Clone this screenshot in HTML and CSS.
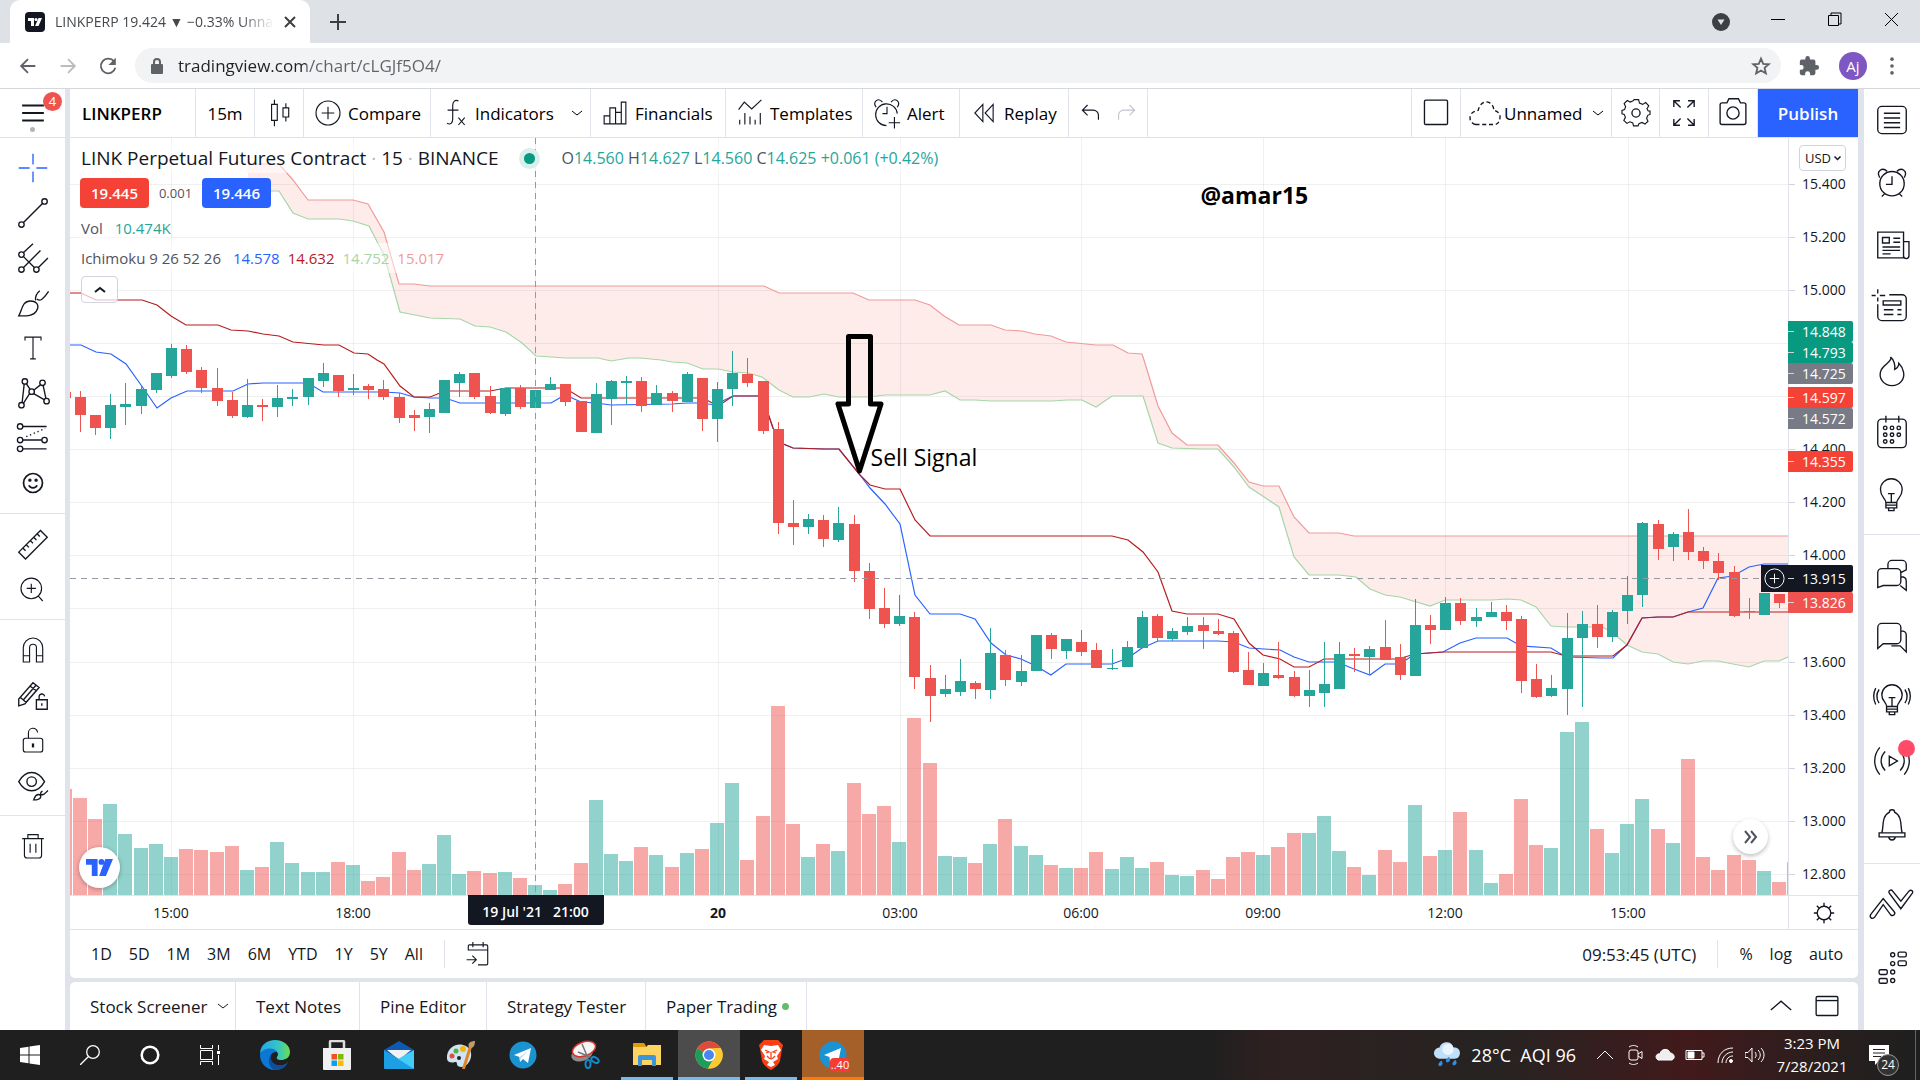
FILE: index.html
```html
<!DOCTYPE html>
<html lang="en">
<head>
    <meta charset="UTF-8">
    <meta name="viewport" content="width=device-width, initial-scale=1.0">
    <title>LINKPERP 19.424 ▼ −0.33% Unnamed</title>
    <link rel="stylesheet" href="styles.css">
</head>
<body>
    <!-- Browser window -->
    <header class="tab-strip">
        <div class="browser-tab">
            <svg class="favicon" viewBox="0 0 20 20"><rect width="20" height="20" rx="4" fill="#131722"/><path d="M3 6h6v8H6V9H3zM13.500 6H17l-3.500 8h-3.400z" fill="#fff"/><circle cx="11" cy="7.500" r="1.500" fill="#fff"/></svg>
            <span class="tab-title">LINKPERP 19.424 ▼ −0.33% Unnamed</span>
            <button class="tab-close" aria-label="Close tab"><svg viewBox="0 0 12 12"><path d="M1 1l10 10M11 1L1 11" stroke="#3c4043" stroke-width="2"/></svg></button>
        </div>
        <button class="new-tab" aria-label="New tab"><svg viewBox="0 0 16 16"><path d="M8 0v16M0 8h16" stroke="#3c4043" stroke-width="2"/></svg></button>
        <div class="window-buttons">
            <button aria-label="Search tabs"><svg viewBox="0 0 20 20"><circle cx="10" cy="10" r="9" fill="#3c4043"/><path d="M6.500 7.500h7L10 13z" fill="#dee1e6"/></svg></button>
            <button aria-label="Minimize"><svg viewBox="0 0 20 20"><path d="M3 7.500h14" stroke="#000"/></svg></button>
            <button aria-label="Restore"><svg viewBox="0 0 20 20"><path d="M3.500 3.500h10v10h-10zM6 3V1h10v11h-2" fill="none" stroke="#000"/></svg></button>
            <button aria-label="Close"><svg viewBox="0 0 20 20"><path d="M3 1l13 13M16 1L3 14" stroke="#000"/></svg></button>
        </div>
    </header>
    <div class="address-bar">
        <button aria-label="Back"><svg viewBox="0 0 24 24"><path d="M20 12H5M12 4.500L4.500 12l7.500 7.500" fill="none" stroke="#5f6368" stroke-width="2"/></svg></button>
        <button aria-label="Forward"><svg viewBox="0 0 24 24"><path d="M4 12h15M12 4.500l7.500 7.500-7.500 7.500" fill="none" stroke="#babcbe" stroke-width="2"/></svg></button>
        <button aria-label="Reload"><svg viewBox="0 0 24 24"><path d="M18.500 7A8 8 0 1 0 20 14" fill="none" stroke="#5f6368" stroke-width="2"/><path d="M20.500 3v8h-8z" fill="#5f6368"/></svg></button>
        <div class="omnibox">
            <svg class="padlock" viewBox="0 0 12 16"><rect y="6" width="12" height="10" rx="1" fill="#5f6368"/><path d="M3 7V4a3 3 0 0 1 6 0v3" fill="none" stroke="#5f6368" stroke-width="2"/></svg>
            <input type="text" aria-label="Address" value="tradingview.com/chart/cLGJf5O4/">
            <button aria-label="Bookmark"><svg viewBox="0 0 24 24"><path d="M12 4l2.400 5.600 6.100.500-4.600 4 1.400 6L12 16.900 6.700 20.100l1.400-6-4.600-4 6.100-.500z" fill="none" stroke="#5f6368" stroke-width="2"/></svg></button>
        </div>
        <button aria-label="Extensions"><svg viewBox="0 0 24 24"><path d="M20.500 11H19V7a2 2 0 0 0-2-2h-4V3.500a2.500 2.500 0 0 0-5 0V5H4a2 2 0 0 0-2 2v3.800h1.500a2.700 2.700 0 0 1 0 5.400H2V20a2 2 0 0 0 2 2h3.800v-1.500a2.700 2.700 0 0 1 5.400 0V22H17a2 2 0 0 0 2-2v-4h1.500a2.500 2.500 0 0 0 0-5z" fill="#5f6368"/></svg></button>
        <button class="avatar">Aj</button>
        <button aria-label="Menu"><svg viewBox="0 0 24 24" fill="#5f6368"><circle cx="12" cy="4.500" r="2"/><circle cx="12" cy="12" r="2"/><circle cx="12" cy="19.500" r="2"/></svg></button>
    </div>

    <main class="app">
        <!-- Drawing tools -->
        <nav class="left-bar">
            <div class="menu-box">
                <button class="menu-button" aria-label="Open menu"><svg class="icon" viewBox="0 0 28 28"><path d="M6 8.500h16M6 14h16M6 19.500h16" stroke-width="1.500"/></svg></button>
                <span class="menu-badge">4</span>
                <span class="menu-dot"></span>
            </div>
            <div class="tool-group">
                <button class="active" aria-label="Cross"><svg class="icon" viewBox="0 0 28 28"><path d="M14 3.500v8M14 16.500v8M3.500 14h8M16.500 14h8"/></svg></button>
                <button aria-label="Trend line"><svg class="icon" viewBox="0 0 28 28"><circle cx="5.500" cy="22.500" r="2"/><circle cx="22.500" cy="5.500" r="2"/><path d="M7 21L21 7"/></svg></button>
                <button aria-label="Pitchfork"><svg class="icon" viewBox="0 0 28 28"><circle cx="5.500" cy="11.500" r="2"/><circle cx="5.500" cy="22.500" r="2"/><circle cx="16.500" cy="22.500" r="2"/><path d="M7 10l7-6.500M7 21L19.500 8.500M18 21l7-7M7 13l8 8"/></svg></button>
                <button aria-label="Brush"><svg class="icon" viewBox="0 0 28 28"><path d="M3.500 23.500C6 19 6 12.500 12 12.500c5 0 7 3.500 4.500 7.500-2.500 4-8 3.500-13 3.500zM16 12c-.500-3 .500-5 3-7M17 11c2 2 4 1 8.500-5.500"/></svg></button>
                <button aria-label="Text"><svg class="icon small" viewBox="0 0 28 28"><path d="M7 7.500V4.500h14v3M14 4.500v19M11.500 23.500h5"/></svg></button>
                <button aria-label="Patterns"><svg class="icon" viewBox="0 0 28 28"><circle cx="8" cy="5.500" r="2"/><circle cx="21" cy="6.500" r="2"/><circle cx="13" cy="13" r="2"/><circle cx="5.500" cy="23" r="2"/><circle cx="24" cy="20" r="2"/><path d="M7.500 7.500L6 21M9 7l3 4.500M19.500 8l-5 4M21.500 8.500l2 9.500M11.500 14.500L7 21.500M14.500 14.500l8 4.500"/></svg></button>
                <button aria-label="Prediction"><svg class="icon" viewBox="0 0 28 28"><circle cx="4.500" cy="5.500" r="2"/><circle cx="4.500" cy="15.500" r="2"/><circle cx="4.500" cy="22" r="2"/><circle cx="22.500" cy="15.500" r="2"/><path d="M6.500 5.500H24M6.500 15.500h14M6.500 22H24"/><path d="M9 13l14-6" stroke-dasharray="1 2"/></svg></button>
                <button aria-label="Emoji"><svg class="icon small" viewBox="0 0 28 28"><circle cx="14" cy="14" r="8.300" stroke-width="1.500"/><circle cx="11.300" cy="11.500" r="1" fill="#131722"/><circle cx="16.700" cy="11.500" r="1" fill="#131722"/><path d="M10.500 16c1 3 6 3 7 0" stroke-width="1.500"/></svg></button>
            </div>
            <div class="tool-group">
                <button aria-label="Measure"><svg class="icon" viewBox="0 0 28 28"><path d="M3.500 20L19.500 4l5 5-16 16zM6.500 17l2 2M9 14.500l2 2M12 11.500l2 2M14.500 9l2 2M17 6.500l2 2"/></svg></button>
                <button aria-label="Zoom in"><svg class="icon small" viewBox="0 0 28 28"><circle cx="12.500" cy="13.500" r="9"/><path d="M12.500 9.500v8M8.500 13.500h8M18.500 20l4 4.500"/></svg></button>
            </div>
            <div class="tool-group">
                <button aria-label="Magnet"><svg class="icon small" viewBox="0 0 28 28"><path d="M5.500 24.500V12a8.500 8.500 0 0 1 17 0v12.500h-5.500V12a3 3 0 0 0-6 0v12.500zM5.500 19h5.500M17 19h5.500"/></svg></button>
                <button aria-label="Drawing mode"><svg class="icon" viewBox="0 0 28 28"><path d="M3.500 22v-5L14 5l4.500 3.500L8 20.500zM5 16l4 3.500M12 7.500l4 3M7 17.500L16 7M16.500 17.500h8v7h-8zM18.500 17.500v-2a2 2 0 0 1 4-.500M20.500 20v2"/></svg></button>
                <button aria-label="Lock drawings"><svg class="icon small" viewBox="0 0 28 28"><rect x="5.500" y="12.500" width="17" height="12" rx="2"/><path d="M10 12.500V8a4 4 0 0 1 8-.500"/><path d="M14 17v3.500" stroke-width="2"/></svg></button>
                <button aria-label="Hide drawings"><svg class="icon" viewBox="0 0 28 28"><path d="M3.500 11.500c5-9 14-9 19 0-5 9-14 9-19 0z"/><circle cx="13" cy="11.500" r="3.500"/><path d="M14.500 25c1-2 1-4 3.500-4s3 4-3.500 4zM20 22c-1-2 0-3 1-3.500M20 21c2 1 3-1 5-3"/></svg></button>
            </div>
            <div class="tool-group">
                <button aria-label="Remove drawings"><svg class="icon small" viewBox="0 0 28 28"><path d="M4.500 7.500h19M9.500 7V4h9v3M6.500 7.500V22a2.500 2.500 0 0 0 2.500 2.500h10a2.500 2.500 0 0 0 2.500-2.500V7.500M11.500 12v8M16.500 12v8"/></svg></button>
            </div>
        </nav>

        <section class="center">
            <div class="toolbar">
                <button class="symbol">LINKPERP</button>
                <button class="middle">15m</button>
                <button class="middle" aria-label="Candles"><svg class="icon small" viewBox="0 0 28 28"><path d="M7.500 6.500h5v14h-5zM10 2.500v4M10 20.500v5M17.500 9.500h5v8h-5zM20 5.500v4M20 17.500v4"/></svg></button>
                <button><svg class="icon small" viewBox="0 0 28 28"><circle cx="14" cy="14" r="10.500"/><path d="M14 8.500v11M8.500 14h11"/></svg>Compare</button>
                <button><svg class="icon small" viewBox="0 0 28 28"><path d="M17 3.500c-3-1.500-5 .500-5 4V19c0 4-2 5.500-5 4M7.500 11.500H17M17 18l5.500 6.500M22.500 18L17 24.500"/></svg>Indicators<svg class="chevron" viewBox="0 0 12 8"><path d="M1 2l5 4 5-4"/></svg></button>
                <button><svg class="icon small" viewBox="0 0 28 28"><path d="M4.500 16.500h5v7h-5zM9.500 9.500h5v14h-5zM14.500 13.500h5v10h-5zM19.500 4.500h4v19h-4z"/></svg>Financials</button>
                <button><svg class="icon small" viewBox="0 0 28 28"><path d="M4 11l5-6.500 6.500 6L24 2.500M5 20v4M9.500 14v10M14 17v7M18.500 20v4M23 14v10"/></svg>Templates</button>
                <button><svg class="icon small" viewBox="0 0 28 28"><path d="M13.500 25a9.500 9.500 0 1 1 9.500-10.500M4.500 9C1 4 6.500 0 10 4.500M17.500 4.500C21 0 26.500 4 23 9M14 8.500v6h-4M20.500 17.500v10M15.500 22.500h10"/></svg>Alert</button>
                <button><svg class="icon small" viewBox="0 0 28 28"><path d="M13 6.500v15L6 14zM22 6.500v15L15 14z"/></svg>Replay</button>
                <div class="history">
                    <button aria-label="Undo"><svg class="icon small" viewBox="0 0 28 28"><path d="M11 7l-4.500 4.500L11 16M6.500 11.500H16a4.500 4.500 0 0 1 4.500 4.500v4"/></svg></button>
                    <button class="disabled" aria-label="Redo"><svg class="icon small" viewBox="0 0 28 28"><path d="M17 7l4.500 4.500L17 16M21.500 11.500H12A4.500 4.500 0 0 0 7.500 16v4"/></svg></button>
                </div>
                <div class="spacer"></div>
                <button class="middle" aria-label="Layout"><svg class="icon" viewBox="0 0 28 28"><rect x="5.500" y="4.500" width="17" height="18" rx="1"/></svg></button>
                <button class="unnamed"><svg class="icon" viewBox="0 0 28 28"><path d="M7 22.500a5 5 0 0 1-1-9.500l3-1C10 7 14 4.500 17.500 6.500c2.500 1.500 3 4 3 5.500 3.500 1 5 3 4.500 6s-2 4.500-4 4.500z" stroke-dasharray="3 2"/></svg>Unnamed<svg class="chevron" viewBox="0 0 12 8"><path d="M1 2l5 4 5-4"/></svg></button>
                <button class="middle" aria-label="Settings"><svg class="icon" viewBox="0 0 28 28"><path d="M12 3h4l.700 3 2.800 1.200 2.700-1.600 2.700 2.800-1.600 2.700L24.400 13H26v3l-2 .800-1 2.500 1.200 2.700-2.600 2.500-2.700-1.500-2.600 1.100L15.500 26h-4l-.600-2.500-2.500-1-2.700 1.400L3 21.300l1.400-2.700-1-2.600-2-.500v-3l2.200-.700 1-2.500L3.300 6.500 6 3.800l2.600 1.400L11.200 4z" transform="translate(2.500 1.600) scale(.84)"/><circle cx="14" cy="14" r="3"/></svg></button>
                <button class="middle" aria-label="Fullscreen"><svg class="icon" viewBox="0 0 28 28"><path d="M6.500 9.500V5H11M7 5.500l4.500 4.500M17 5h4.500v4.500M21 5.500L16.500 10M6.500 18.500V23H11M7 22.500l4.500-4.500M17 23h4.500v-4.500M21 22.500L16.500 18"/></svg></button>
                <button class="middle" aria-label="Snapshot"><svg class="icon" viewBox="0 0 28 28"><path d="M6 6.500h3.500l1.500-3h7l1.500 3H22a1.500 1.500 0 0 1 1.500 1.500v13a1.500 1.500 0 0 1-1.500 1.500H6A1.500 1.500 0 0 1 4.500 21V8A1.500 1.500 0 0 1 6 6.500z"/><circle cx="14" cy="14" r="4.500"/></svg></button>
                <button class="publish">Publish</button>
            </div>

            <div class="chart-row">
                <div class="pane">
                    <svg id="chart" viewBox="70 138 1718 757" preserveAspectRatio="none"></svg>
                    <div class="legend">
                        <div class="legend-title"><h1>LINK Perpetual Futures Contract <i>·</i> 15 <i>·</i> BINANCE</h1><span class="market-dot"></span>
                            <p class="ohlc">O<b>14.560</b> H<b>14.627</b> L<b>14.560</b> C<b>14.625</b> <b>+0.061 (+0.42%)</b></p></div>
                        <div class="trade"><button class="sell">19.445</button><span>0.001</span><button class="buy">19.446</button></div>
                        <p class="study">Vol <b class="teal">10.474K</b></p>
                        <p class="study">Ichimoku 9 26 52 26 <b class="blue">14.578</b><b class="dark-red">14.632</b><b class="green">14.752</b><b class="pink">15.017</b></p>
                        <button class="collapse" aria-label="Collapse legend"><svg class="chevron" viewBox="0 0 12 8"><path d="M1 6l5-4 5 4" stroke-width="2"/></svg></button>
                    </div>
                    <span class="note author">@amar15</span>
                    <span class="note signal">Sell Signal</span>
                    <a class="tv-logo" href="#" aria-label="TradingView"><svg viewBox="0 0 28 18"><path d="M0 0h12v18H6V6H0zM20 0h8l-7.500 18h-7z"/><circle cx="16" cy="3" r="3"/></svg></a>
                    <button class="scroll-end" aria-label="Scroll to last bar"><svg viewBox="0 0 16 16"><path d="M2 2l5 6-5 6M8 2l5 6-5 6"/></svg></button>
                </div>
                <div class="price-axis" id="priceAxis">
                    <select aria-label="Currency"><option>USD</option></select>
                    <svg class="usd-arrow" viewBox="0 0 12 8"><path d="M2 2l4 4 4-4"/></svg>
                </div>
            </div>
            <div class="time-row">
                <div class="time-axis" id="timeAxis"><span class="time-tag">19 Jul '21 &nbsp; 21:00</span></div>
                <button class="axis-settings" aria-label="Axis settings"><svg class="icon" viewBox="0 0 28 28"><circle cx="14" cy="14" r="5"/><path d="M14 6.500V9M14 19v2.500M6.500 14H9M19 14h2.500M8.700 8.700l1.800 1.800M17.500 17.500l1.800 1.800M8.700 19.300l1.800-1.800M17.500 10.500l1.800-1.800"/></svg></button>
            </div>
            <div class="range-bar">
                <button>1D</button><button>5D</button><button>1M</button><button>3M</button><button>6M</button><button>YTD</button><button>1Y</button><button>5Y</button><button>All</button>
                <span class="divider"></span>
                <button aria-label="Go to date"><svg class="icon small" viewBox="0 0 28 28"><path d="M5.500 11V7a1 1 0 0 1 1-1h15a1 1 0 0 1 1 1v15.500a1 1 0 0 1-1 1H14M5.500 10.500h17M9.500 3.500V8M18.500 3.500V8M4 19h8M9 15.500l3.500 3.500L9 22.500"/></svg></button>
                <div class="spacer"></div>
                <button class="clock">09:53:45 (UTC)</button>
                <span class="divider"></span>
                <button>%</button><button>log</button><button>auto</button>
            </div>
            <div class="bottom-tabs">
                <button>Stock Screener<svg class="chevron" viewBox="0 0 12 8"><path d="M1 2l5 4 5-4"/></svg></button>
                <button>Text Notes</button>
                <button>Pine Editor</button>
                <button>Strategy Tester</button>
                <button>Paper Trading<span class="online"></span></button>
                <div class="panel-buttons">
                    <button aria-label="Open panel"><svg class="icon" viewBox="0 0 28 28"><path d="M6.500 17L14 10.500l7.500 6.500"/></svg></button>
                    <button aria-label="Maximize panel"><svg class="icon" viewBox="0 0 28 28"><rect x="6" y="7" width="16" height="14" rx="1"/><path d="M6 10h16"/></svg></button>
                </div>
            </div>
        </section>

        <!-- Widgets -->
        <nav class="right-bar">
            <div class="widget-group first">
                <button aria-label="Watchlist"><svg class="icon" viewBox="0 0 28 28"><rect x="3.500" y="4" width="21" height="20" rx="3"/><path d="M8 9h12M8 12.500h12M8 16h12M8 19.500h12"/></svg></button>
                <button aria-label="Alerts"><svg class="icon" viewBox="0 0 28 28"><circle cx="14" cy="14.500" r="9"/><path d="M5 10C2 5 7 2 10.500 5.500M17.500 5.500C21 2 26 5 23 10M14 9v6H9.500M8.500 22L6.500 24M19.500 22l2 2"/></svg></button>
                <button aria-label="News"><svg class="icon" viewBox="0 0 28 28"><path d="M3.500 4.500h19v19h-19zM22.500 11.500h4V22a1.500 1.500 0 0 1-4 0zM7 8.500h5v4H7zM15 9h5M15 12h5M7 15.500h13M7 18h13M7 20.500h6"/></svg></button>
                <button aria-label="Data window"><svg class="icon" viewBox="0 0 28 28"><path d="M3.500 12v9a3 3 0 0 0 3 3h15a3 3 0 0 0 3-3V8a3 3 0 0 0-3-3H12M3.500 1v3M3.500 7v3M-1 5.500h3M5 5.500h4M7.500 9.500h13v3h-13zM8 16h7M18 16h3M8 19.500h7M18 19.500h3"/></svg></button>
                <button aria-label="Hotlists"><svg class="icon" viewBox="0 0 28 28"><path d="M13 4.500C14.500 8 8 9.500 6 14c-2.500 6 2 11.500 8 11.500s9.500-5 8.500-10c-.500-3-2-5-3.500-6.500 0 2-1 3.500-3 4.500.500-3-.500-7-3-9z"/></svg></button>
                <button aria-label="Calendar"><svg class="icon" viewBox="0 0 28 28"><rect x="3.500" y="4.500" width="21" height="21" rx="3"/><path d="M9.500 2v5M19 2v5"/><g><circle cx="9" cy="11" r="1.300"/><circle cx="14" cy="11" r="1.300"/><circle cx="19" cy="11" r="1.300"/><circle cx="9" cy="16" r="1.300"/><circle cx="14" cy="16" r="1.300"/><circle cx="19" cy="16" r="1.300"/><circle cx="9" cy="21" r="1.300"/><circle cx="14" cy="21" r="1.300"/></g></svg></button>
                <button aria-label="My ideas"><svg class="icon" viewBox="0 0 28 28"><path d="M9.500 19.500c0-3-4-4-4-9.500a8 8 0 0 1 16 0c0 5.500-4 6.500-4 9.500zM9.500 19.500v4h8v-4M9.500 21.500h8M11.500 24v1.500h4V24M11 13h5M13.500 13v6.500"/></svg></button>
            </div>
            <div class="widget-group second">
                <button aria-label="Public chats"><svg class="icon" viewBox="0 0 28 28"><path d="M3.500 24V13a3 3 0 0 1 3-3h11a3 3 0 0 1 3 3v6.500a3 3 0 0 1-3 3h-10zM11 9.500V7a3 3 0 0 1 3-3h7.500a3 3 0 0 1 3 3v4l-4 2M20.500 16c3 0 4 1 4 3v7L20 22.500"/></svg></button>
                <button aria-label="Private chats"><svg class="icon" viewBox="0 0 28 28"><path d="M3.500 22.500V7a3 3 0 0 1 3-3h11a3 3 0 0 1 3 3v9a3 3 0 0 1-3 3h-10zM20.500 9.500c3 0 4 1 4 3v12.500L20 20.500h-6.500"/></svg></button>
                <button aria-label="Ideas stream"><svg class="icon" viewBox="0 0 28 28"><path d="M10 19.500c0-3-3.500-4-3.500-8.500a7.500 7.500 0 0 1 15 0c0 4.500-3.500 5.500-3.500 8.500zM10 19.500v4h8v-4M10 21.500h8M12 24v1.500h4V24M11.500 13h5M14 13v6.500M4.500 7c-2 3-2 7 0 10M2 6c-2 4-2 8 0 12M23.500 7c2 3 2 7 0 10M26 6c2 4 2 8 0 12"/></svg></button>
                <button aria-label="Streams"><svg class="icon" viewBox="0 0 28 28"><path d="M12 10.500v7l6-3.500zM9 7c-4 4-4 10 0 14M5 4c-5 6-5 14 0 20M20 7c4 4 4 10 0 14M23 4c5 6 5 14 0 20"/></svg><span class="live-dot"></span></button>
                <button aria-label="Notifications"><svg class="icon" viewBox="0 0 28 28"><path d="M6.500 20.500C8 17 6 8 12 5.500a2 2 0 0 1 4 0C22 8 20 17 21.500 20.500M4.500 20.500h19v3h-19zM11.500 23.500c.500 3 4.500 3 5 0"/></svg></button>
            </div>
            <div class="widget-group third">
                <button aria-label="Order panel"><svg class="icon" viewBox="0 0 28 28"><path d="M-1.500 21.500L7.500 10l8 9.500c1.500 1.500-.500 4-2.500 2.500l-5.500-7.500L1 24c-2 1.500-4-.500-2.500-2.500zM12 6c-1-2 1.500-3 2.500-1.500l6 7.500 6-7.500c1.500-1.500 3.500 0 2.500 1.500l-8.500 11.500z"/></svg></button>
                <button aria-label="Depth of market"><svg class="icon" viewBox="0 0 28 28"><rect x="4.500" y="16" width="6" height="3.500" rx="1"/><rect x="4.500" y="22.500" width="6" height="3.500" rx="1"/><circle cx="14.500" cy="17.700" r="1.500"/><circle cx="14.500" cy="24" r="1.500"/><circle cx="14.500" cy="5" r="1.500"/><circle cx="14.500" cy="11.500" r="1.500"/><rect x="18.500" y="3" width="6" height="3.500" rx="1"/><rect x="18.500" y="9.500" width="6" height="3.500" rx="1"/></svg></button>
            </div>
        </nav>
    </main>

    <!-- Windows taskbar -->
    <footer class="taskbar">
        <div class="system-buttons">
            <button aria-label="Start"><svg viewBox="0 0 20 20" fill="#fff"><path d="M0 3l8.500-1.200v7.700H0zM9.500 1.600L20 0v9.500H9.500zM0 10.500h8.500v7.700L0 17zM9.500 10.500H20V20L9.500 18.400z"/></svg></button>
            <button aria-label="Search"><svg viewBox="0 0 20 20" fill="none" stroke="#fff" stroke-width="1.300"><circle cx="13" cy="7" r="6.300"/><path d="M8.500 11.500L0 20"/></svg></button>
            <button aria-label="Cortana"><svg viewBox="0 0 20 20"><circle cx="10" cy="10" r="8.300" fill="none" stroke="#fff" stroke-width="2.500"/></svg></button>
            <button aria-label="Task view"><svg viewBox="0 0 20 20" fill="none" stroke="#fff"><path d="M.500 5.500h12v9H.500zM.500 0v3.500h12V0M.500 20v-3.500h12V20M18.500 0v5M18.500 10v10"/><rect x="17.500" y="6.500" width="2" height="2" fill="#fff"/></svg></button>
        </div>
        <div class="apps">
            <button aria-label="Edge"><svg viewBox="0 0 30 30"><defs><linearGradient id="edge"><stop stop-color="#1fa7e8"/><stop offset=".6" stop-color="#36c4c8"/><stop offset="1" stop-color="#6be04a"/></linearGradient></defs><path d="M0 14C0 5 7 0 15 0c9 0 15 6 15 12 0 6-5 8-9 8-3 0-5-1-4-3 3-4-1-7-5-7C6 10 1 11 0 14z" fill="url(#edge)"/><path d="M0 15C1 8 14 6 17 12c-6-1-8 5-5 10s11 5 16 0c-3 6-8 8-13 8C6 30 0 23 0 15z" fill="#0c78d4"/><path d="M12 13c-4 7 2 14 11 12 2 0 4-2 5-3-3 6-8 8-13 8-7-2-8-12-3-17z" fill="#0f4e9b"/></svg></button>
            <button aria-label="Store"><svg viewBox="0 0 30 30"><path d="M8 9V2a1 1 0 0 1 1-1h12a1 1 0 0 1 1 1v7" fill="none" stroke="#ddd" stroke-width="2.500"/><path d="M1 8h28v21a1 1 0 0 1-1 1H2a1 1 0 0 1-1-1z" fill="#f0f0f0"/><path d="M9.500 14H15v5.500H9.500z" fill="#f25022"/><path d="M16 14h5.500v5.500H16z" fill="#7fba00"/><path d="M9.500 20.500H15V26H9.500z" fill="#00a4ef"/><path d="M16 20.500h5.500V26H16z" fill="#ffb900"/></svg></button>
            <button aria-label="Mail"><svg viewBox="0 0 30 30"><path d="M0 10L15 1l15 9v6H0z" fill="#0f5ab0"/><path d="M3 10h24L15 20z" fill="#f2f2f2"/><path d="M0 10l30 18a1 1 0 0 1-1 1H1a1 1 0 0 1-1-1z" fill="#1d9fe3"/><path d="M30 10L14 19l16 10z" fill="#41cdf8"/></svg></button>
            <button aria-label="Paint"><svg viewBox="0 0 30 30"><path d="M1 19C0 9 9 3 17 5c9 2 10 11 6 17-3 5-8 6-11 4-2-2 0-4-3-4-3 1-7 1-8-3z" fill="#cfe4f2"/><circle cx="6" cy="16" r="2.500" fill="#e64a3c"/><circle cx="10" cy="11" r="2.500" fill="#4caf50"/><circle cx="17" cy="9" r="3" fill="#f6b40e"/><circle cx="13" cy="18" r="2" fill="#20242a"/><path d="M16 29l7-23 3 1-7 22z" fill="#e08427"/><path d="M23 7c-2-4 2-6 6-6 0 3-1 7-4 7z" fill="#c39a6b"/></svg></button>
            <button aria-label="Telegram"><svg viewBox="0 0 30 30"><circle cx="15" cy="15" r="13.500" fill="#1c93d1"/><path d="M6 15l17-7-3 15-5-4-3 3-.500-5z" fill="#fff"/><path d="M11.500 17L20 11l-7 7-1 4z" fill="#bcdcef"/></svg></button>
            <button aria-label="Snipping Tool"><svg viewBox="0 0 30 30"><ellipse cx="12" cy="14" rx="11" ry="7" fill="#8d8d8d" transform="rotate(-20 12 14)"/><ellipse cx="14" cy="9" rx="12" ry="7" fill="#f6f6f6" stroke="#d9332e" stroke-width="1.500" transform="rotate(-20 14 9)"/><path d="M12 4l6 14M8 12l12 5" stroke="#777" stroke-width="1.500"/><g fill="none" stroke="#1588c9" stroke-width="2"><ellipse cx="18" cy="24" rx="2.500" ry="4"/><ellipse cx="25" cy="20" rx="4" ry="2.500" transform="rotate(30 25 20)"/></g></svg></button>
            <button class="open" aria-label="File Explorer"><svg viewBox="0 0 30 30"><path d="M1 4a1 1 0 0 1 1-1h10l2 3v4H1z" fill="#e29a0c"/><path d="M1 7h13l2-2h13v20H1z" fill="#fcd462"/><path d="M6 26V17a2 2 0 0 1 2-2h14a2 2 0 0 1 2 2v9h-4v-6H10v6z" fill="#3a95dc"/></svg></button>
            <button class="open current" aria-label="Chrome"><svg viewBox="0 0 30 30"><circle cx="15" cy="15" r="13.500" fill="#fbc934"/><path d="M15 15L3.300 8.200A13.500 13.500 0 0 1 26.700 8.200H15z" fill="#e04a3c"/><path d="M3.300 8.200A13.500 13.500 0 0 0 14 28.500L20 18l-5-3z" fill="#1d9d58"/><path d="M14 28.500L21 16l-1-8h6.700A13.500 13.500 0 0 1 14 28.500z" fill="#fbc934"/><circle cx="15" cy="15" r="6.500" fill="#fff"/><circle cx="15" cy="15" r="5" fill="#4a86f0"/></svg></button>
            <button class="open" aria-label="Brave"><svg viewBox="0 0 30 30"><path d="M8 0h14l3 3 2 2-1 4-2 12c-1 3-5 7-9 9-4-2-8-6-9-9L4 9 3 5l2-2z" fill="#fb3f14"/><path d="M8 5l7 1 7-1 3 5-4 6 1 3-5 3 2 3-4 2-4-2 2-3-5-3 1-3-4-6z" fill="#fff"/><path d="M9 10l4 2-3 1M21 10l-4 2 3 1M13 18l2 1 2-1M15 12v6M11 16l2 2M19 16l-2 2" stroke="#fb3f14" stroke-width="1.300" fill="none"/></svg></button>
            <button class="open alerting" aria-label="Telegram messages"><svg viewBox="0 0 30 30"><circle cx="15" cy="15" r="13.500" fill="#1c93d1"/><path d="M6 15l17-7-3 15-5-4-3 3-.500-5z" fill="#fff"/></svg><span class="unread">..40</span></button>
        </div>
        <div class="tray">
            <svg class="weather" viewBox="0 0 30 30"><path d="M7 19a6 6 0 0 1 0-12c2-7 13-8 15 0 9-1 9 12 1 12z" fill="#bfe0fa"/><circle cx="16" cy="9" r="6" fill="#e9f5ff"/><path d="M9 21c3 4 0 6-1.500 6S4 25 9 21zM17 17c3 4 0 6-1.500 6S12 21 17 17zM24 20c3 4 0 6-1.500 6S19 24 24 20z" fill="#2f8ee5"/></svg>
            <span class="forecast">28°C &nbsp;AQI 96</span>
            <svg viewBox="0 0 20 20"><path d="M2 14l8-8 8 8"/></svg>
            <svg viewBox="0 0 20 20"><rect x="4" y="5" width="9" height="10" rx="2"/><path d="M13 9l4-2.500v7L13 11M4 2c3-2 6-2 9 0M4 18c3 2 6 2 9 0"/></svg>
            <svg viewBox="0 0 20 20"><path d="M3 15C-1 12 2 8 5 9c1-6 9-6 10-1 4 0 6 5 2 7z" fill="#eee"/></svg>
            <svg viewBox="0 0 20 20"><path d="M1 5.500h16v9H1zM17 8h2v4h-2"/><path d="M3 7h6v6H3z" fill="#fff"/></svg>
            <svg viewBox="0 0 20 20"><path d="M3 18C3 9 9 3 18 3M7 18c0-6 5-11 11-11M11 18c0-4 3-7 7-7"/><circle cx="16" cy="16" r="1.500" fill="#fff"/></svg>
            <svg viewBox="0 0 20 20"><path d="M0 7.500h3L7 3v14l-4-4.500H0zM10 7c1.500 2 1.500 4 0 6M13 5c3 3 3 7 0 10M16 3c4 4 4 10 0 14"/></svg>
            <div class="date"><span>3:23 PM</span><span>7/28/2021</span></div>
            <button class="action-center" aria-label="Notifications"><svg viewBox="0 0 20 20"><path d="M0 0h20v16H10l-4 4v-4H0z" fill="#fff" stroke="none"/><path d="M4 4.500h12M4 8h12M4 11.500h8" stroke="#222"/></svg><span>24</span></button>
            <span class="show-desktop"></span>
        </div>
    </footer>

    <script>
        // dir, high, top of body, bottom of body, low, top of volume bar
        const bars = [
            ['r', 391, 392, 398, 398, 789], ['r', 391, 397, 415, 432, 798], ['r', 415, 415, 428, 435, 819],
            ['g', 394, 405, 428, 439, 804], ['g', 383, 404, 407, 425, 834], ['g', 385, 389, 406, 414, 848],
            ['g', 373, 373, 390, 393, 844], ['g', 344, 348, 376, 378, 857], ['r', 345, 349, 372, 374, 849],
            ['r', 367, 370, 388, 393, 850], ['r', 368, 388, 401, 406, 852], ['r', 392, 400, 416, 418, 846],
            ['g', 379, 405, 417, 418, 870], ['r', 399, 405, 407, 421, 867], ['g', 385, 398, 407, 417, 842],
            ['g', 389, 397, 399, 406, 863], ['g', 378, 378, 397, 405, 872], ['g', 363, 373, 381, 387, 872],
            ['r', 375, 375, 391, 397, 862], ['g', 374, 388, 390, 395, 865], ['r', 384, 386, 390, 399, 881],
            ['r', 380, 389, 397, 400, 877], ['r', 393, 397, 418, 423, 852], ['r', 410, 415, 418, 431, 870],
            ['g', 403, 409, 417, 433, 864], ['g', 380, 380, 413, 413, 835], ['g', 372, 374, 383, 397, 874],
            ['r', 373, 373, 397, 399, 871], ['r', 386, 396, 413, 414, 873], ['g', 388, 388, 414, 416, 872],
            ['r', 385, 388, 407, 409, 878], ['g', 390, 390, 408, 408, 885], ['g', 377, 384, 390, 390, 890],
            ['r', 384, 384, 402, 406, 884], ['r', 401, 401, 432, 432, 863], ['g', 383, 394, 433, 433, 800],
            ['g', 380, 381, 399, 425, 854], ['g', 376, 381, 383, 404, 861], ['r', 377, 381, 406, 412, 847],
            ['g', 385, 393, 405, 405, 855], ['r', 391, 393, 401, 412, 867], ['g', 372, 374, 402, 402, 853],
            ['r', 378, 378, 419, 431, 849], ['g', 382, 389, 419, 442, 823], ['g', 351, 373, 389, 406, 783],
            ['r', 358, 374, 383, 387, 860], ['r', 381, 381, 431, 434, 816], ['r', 422, 429, 523, 534, 706],
            ['r', 500, 523, 527, 545, 824], ['g', 514, 519, 527, 534, 857], ['r', 515, 520, 539, 547, 844],
            ['g', 507, 523, 540, 542, 851], ['r', 515, 524, 571, 582, 783], ['r', 563, 571, 609, 619, 814],
            ['r', 588, 608, 624, 628, 806], ['g', 595, 616, 624, 626, 842], ['r', 612, 617, 677, 689, 718],
            ['r', 665, 678, 696, 722, 763], ['g', 675, 689, 694, 697, 856], ['g', 659, 681, 692, 696, 857],
            ['r', 681, 683, 689, 699, 863], ['g', 628, 653, 690, 699, 844], ['r', 650, 655, 680, 686, 819],
            ['g', 655, 671, 682, 686, 846], ['g', 635, 635, 671, 671, 855], ['r', 633, 635, 649, 659, 865],
            ['g', 639, 639, 651, 659, 868], ['r', 630, 642, 652, 656, 868], ['r', 643, 650, 668, 668, 852],
            ['g', 649, 668, 669, 670, 869], ['g', 641, 647, 667, 667, 857], ['g', 611, 617, 648, 648, 868],
            ['r', 614, 616, 638, 642, 862], ['g', 628, 631, 639, 641, 875], ['g', 617, 626, 632, 635, 876],
            ['r', 617, 625, 631, 649, 870], ['r', 619, 631, 634, 635, 879], ['r', 631, 633, 672, 673, 857],
            ['r', 652, 670, 685, 685, 852], ['g', 663, 673, 686, 686, 855], ['r', 642, 675, 678, 679, 847],
            ['r', 671, 677, 696, 697, 833], ['g', 670, 690, 696, 707, 833], ['g', 642, 684, 693, 707, 816],
            ['g', 642, 654, 689, 689, 851], ['r', 648, 654, 656, 672, 867], ['g', 646, 649, 657, 674, 875],
            ['r', 620, 647, 660, 660, 850], ['r', 644, 657, 675, 680, 862], ['g', 599, 625, 676, 676, 805],
            ['r', 615, 625, 630, 644, 856], ['g', 597, 603, 630, 630, 850], ['r', 598, 603, 621, 625, 812],
            ['g', 608, 617, 621, 627, 850], ['g', 602, 612, 617, 617, 883], ['r', 605, 612, 621, 630, 874],
            ['r', 616, 619, 681, 693, 799], ['r', 664, 679, 697, 698, 845], ['g', 675, 688, 696, 697, 848],
            ['g', 613, 638, 689, 715, 732], ['g', 611, 624, 638, 707, 722], ['r', 605, 624, 637, 648, 829],
            ['g', 610, 612, 637, 642, 853], ['g', 576, 595, 611, 624, 824], ['g', 522, 523, 595, 607, 799],
            ['r', 520, 524, 549, 560, 829], ['g', 532, 534, 547, 561, 843], ['r', 509, 532, 552, 560, 759],
            ['r', 547, 551, 561, 569, 857], ['r', 553, 561, 573, 580, 870], ['r', 566, 572, 616, 617, 855],
            ['r', 598, 611, 612, 619, 860], ['g', 593, 593, 615, 615, 871], ['r', 594, 594, 603, 608, 882]
        ];

        const spanA = '248,191 279,191 293,213 308,219 339,219 353,221 369,226 384,255 400,312 430,318 460,319 475,326 490,327 506,332 522,343 536,356 552,357 565,358 598,358 611,361 629,358 640,358 661,360 672,362 687,363 703,369 718,369 733,372 748,373 762,377 779,390 793,397 809,397 824,394 839,397 869,397 885,395 930,395 945,391 960,400 975,400 991,401 1052,401 1067,400 1082,400 1096,407 1112,396 1143,396 1158,443 1172,448 1202,449 1218,449 1234,467 1249,487 1279,507 1294,557 1309,575 1339,575 1356,577 1370,589 1385,595 1400,597 1430,606 1445,600 1492,600 1507,599 1521,600 1536,607 1551,626 1566,627 1602,627 1612,632 1627,645 1642,652 1658,654 1673,662 1688,664 1703,661 1718,661 1733,664 1749,667 1764,661 1779,661 1788,657';
        const spanB = '248,164 279,164 293,180 308,200 353,200 368,204 384,232 399,284 414,284 430,286 764,286 779,293 853,293 869,300 915,300 930,305 944,316 959,325 991,325 1005,330 1022,331 1035,334 1051,336 1066,342 1096,345 1113,345 1128,353 1142,354 1144,360 1158,406 1172,433 1187,445 1218,445 1234,463 1249,482 1263,486 1279,486 1294,517 1309,533 1339,533 1354,536 1788,536';
        const kijun = '70,293 81,293 96,300 142,300 157,305 171,316 186,325 218,325 231,330 248,331 263,334 279,336 293,342 324,345 339,345 354,353 368,354 377,360 384,364 400,386 414,397 430,397 445,391 490,391 506,388 565,388 581,398 703,398 718,406 733,396 762,396 773,428 781,443 793,448 824,449 839,449 860,475 870,485 885,489 900,489 915,520 930,536 1112,536 1128,540 1143,552 1158,572 1172,611 1187,614 1218,614 1234,619 1249,643 1263,655 1280,659 1294,667 1309,667 1324,659 1398,659 1415,654 1443,652 1551,652 1566,656 1613,656 1627,645 1642,618 1658,617 1673,617 1688,612 1788,612';
        const tenkan = '70,345 81,345 96,352 111,354 120,360 126,364 141,385 157,408 171,398 187,391 233,391 248,384 263,383 308,383 323,392 384,392 400,393 414,397 430,398 445,398 460,403 551,403 565,395 581,402 596,403 611,405 672,404 687,403 703,403 714,405 733,396 762,396 773,428 781,443 793,448 824,449 839,449 860,475 870,488 885,504 900,524 915,595 930,614 960,614 975,619 991,643 1006,655 1021,659 1036,666 1051,675 1066,664 1112,664 1128,658 1142,648 1158,641 1218,641 1234,642 1249,648 1280,650 1294,657 1309,662 1337,662 1354,669 1370,675 1385,664 1400,664 1415,654 1443,652 1460,643 1476,638 1507,638 1521,646 1551,648 1566,657 1602,658 1613,658 1627,645 1642,618 1658,617 1673,617 1688,612 1703,608 1718,578 1733,576 1749,567 1764,564 1788,564';

        const LEFT = 70, TOP = 138, WIDTH = 1718, HEIGHT = 757, BOTTOM = TOP + HEIGHT;
        const priceY = price => 184 + (15.4 - price) * 265.3;
        const timeLabels = [['15:00', 171], ['18:00', 353], ['', 535], ['20', 718], ['03:00', 900], ['06:00', 1081], ['09:00', 1263], ['12:00', 1445], ['15:00', 1628]];

        function drawChart() {
            let grid = '', volume = '', candles = '';
            for (let p = 15.4; p > 12.7; p -= 0.2) {
                const y = Math.round(priceY(p));
                grid += `<path d="M${LEFT} ${y}.5h${WIDTH}"/>`;
            }
            timeLabels.forEach(t => {
                grid += `<path d="M${t[1]}.5 ${TOP}v${HEIGHT}"/>`;
            });
            bars.forEach((bar, i) => {
                const [dir, high, top, bottom, low, vol] = bar;
                const x = Math.round(171 + (i - 7) * 15.17);
                volume += `<rect class="vol-${dir}" x="${x - 7}" y="${vol}" width="14" height="${BOTTOM - vol}"/>`;
                candles += `<path class="${dir}" d="M${x} ${high}h1v${low - high}h-1zM${x - 5} ${top}h11v${bottom - top}h-11z"/>`;
            });
            volume += `<rect class="vol-r" x="1787" y="862" width="1" height="33"/>`;
            const cloud = spanA + ' ' + spanB.split(' ').reverse().join(' ');
            document.getElementById('chart').innerHTML = `
                <g class="grid">${grid}</g>
                <g>${volume}</g>
                <polygon class="cloud" points="${cloud}"/>
                <polyline class="line span-a" points="${spanA}"/>
                <polyline class="line span-b" points="${spanB}"/>
                <polyline class="line tenkan" points="${tenkan}"/>
                <polyline class="line kijun" points="${kijun}"/>
                <g>${candles}</g>
                <path class="crosshair" d="M535.5 ${TOP}V${BOTTOM}M${LEFT} 578.5H1788"/>
                <path class="arrow" d="M848.5 336.500h22V404H881l-21.500 67L838 404h10.500z"/>`;
        }

        function drawAxes() {
            const tags = [
                ['14.848', 321, 'teal-tag'], ['14.793', 342, 'teal-tag'], ['14.725', 363, 'grey-tag'],
                ['14.597', 387, 'red-tag'], ['14.572', 408, 'grey-tag'], ['14.355', 451, 'red-tag'],
                ['13.826', 592, 'last-tag'], ['13.915', 565, 'cross-tag']
            ];
            const percent = y => ((y - TOP) / HEIGHT * 100).toFixed(3);
            let content = '';
            [15.4, 15.2, 15, 14.4, 14.2, 14, 13.6, 13.4, 13.2, 13, 12.8].forEach(p => {
                content += `<span class="price" style="top: ${percent(priceY(p))}%">${p.toFixed(3)}</span>`;
            });
            tags.forEach(t => {
                const plus = t[2] === 'cross-tag' ? '<svg viewBox="0 0 24 24"><circle cx="12" cy="12" r="10"/><path d="M12 7v10M7 12h10"/></svg>' : '';
                content += `<span class="tag ${t[2]}" style="top: ${percent(t[1])}%">${plus}${t[0]}</span>`;
            });
            document.getElementById('priceAxis').insertAdjacentHTML('beforeend', content);

            const times = timeLabels.map(t => {
                return `<span class="time ${t[0] === '20' ? 'day' : ''}" style="left: ${((t[1] - LEFT) / WIDTH * 100).toFixed(3)}%">${t[0]}</span>`;
            });
            document.getElementById('timeAxis').insertAdjacentHTML('afterbegin', times.join(''));
        }

        drawChart();
        drawAxes();
    </script>
</body>
</html>
```
FILE: styles.css
```css
* {
    box-sizing: border-box;
}
body {
    margin: 0;
    height: 100vh;
    display: flex;
    flex-direction: column;
    font-family: "Open Sans", "Liberation Sans", sans-serif;
    font-size: 16px;
    color: #131722;
    background-color: #fff;
    overflow: hidden;
}
button, input, select {
    font: inherit;
    color: inherit;
    background: none;
    border: 0;
    padding: 0;
    margin: 0;
    white-space: nowrap;
}
button {
    cursor: pointer;
    display: flex;
    align-items: center;
    justify-content: center;
}
svg {
    display: block;
    flex: none;
}
.icon {
    width: 38px;
    height: 38px;
    fill: none;
    stroke: currentColor;
    overflow: visible;
}
.icon.small {
    width: 32px;
    height: 32px;
}
.chevron {
    width: 12px;
    height: 8px;
    fill: none;
    stroke: currentColor;
}
.spacer {
    flex: 1;
}

/* browser */
.tab-strip {
    height: 43px;
    flex: none;
    display: flex;
    background-color: #dee1e6;
    padding-left: 10px;
}
.browser-tab {
    width: 300px;
    background-color: #fff;
    border-radius: 10px 10px 0 0;
    display: flex;
    align-items: center;
    padding: 0 14px 0 15px;
}
.favicon {
    width: 20px;
    height: 20px;
    margin-right: 10px;
}
.tab-title {
    flex: 1;
    font-size: 14px;
    color: #45494d;
    white-space: nowrap;
    overflow: hidden;
    -webkit-mask-image: linear-gradient(to right, #000 85%, transparent);
    mask-image: linear-gradient(to right, #000 85%, transparent);
}
.tab-close {
    width: 12px;
    margin-left: 10px;
}
.tab-close svg {
    width: 12px;
}
.new-tab {
    width: 56px;
}
.new-tab svg {
    width: 16px;
}
.window-buttons {
    margin-left: auto;
    display: flex;
}
.window-buttons button {
    width: 57px;
}
.window-buttons svg {
    width: 20px;
}
.address-bar {
    height: 46px;
    flex: none;
    display: flex;
    align-items: center;
    padding: 0 8px;
    border-bottom: 1px solid #d5d7da;
}
.address-bar button {
    width: 40px;
    height: 35px;
}
.address-bar button svg {
    width: 22px;
}
.omnibox {
    flex: 1;
    height: 35px;
    margin: 0 8px 0 7px;
    border-radius: 18px;
    background-color: #f1f3f4;
    display: flex;
    align-items: center;
    padding: 0 0 0 16px;
}
.padlock {
    width: 12px;
    margin-right: 15px;
}
.omnibox input {
    flex: 1;
    font-size: 17px;
    outline: none;
    background: linear-gradient(to right, #202124 128px, #5f6368 128px);
    -webkit-background-clip: text;
    background-clip: text;
    -webkit-text-fill-color: transparent;
}
.address-bar .avatar {
    width: 28px;
    height: 28px;
    margin: 0 5px 0 10px;
    border-radius: 50%;
    background-color: #7e57c2;
    color: #fff;
    font-size: 15px;
}

/* app frame */
.app {
    flex: 1;
    min-height: 0;
    display: flex;
    background-color: #e0e3eb;
}
.left-bar {
    width: 65px;
    background-color: #fff;
}
.menu-box {
    height: 49px;
    position: relative;
    border-bottom: 1px solid #e0e3eb;
}
.menu-button {
    width: 100%;
    height: 48px;
}
.menu-badge {
    position: absolute;
    right: 3px;
    top: 3px;
    width: 19px;
    height: 19px;
    border-radius: 50%;
    background-color: #ef5350;
    color: #fff;
    font-size: 13px;
    line-height: 19px;
    text-align: center;
}
.menu-dot {
    position: absolute;
    left: 30px;
    bottom: 5px;
    width: 5px;
    height: 5px;
    border-radius: 50%;
    background-color: #b2b5be;
}
.tool-group {
    padding: 7px 0 8px;
    border-bottom: 1px solid #e0e3eb;
}
.tool-group:last-child {
    border-bottom: 0;
}
.tool-group button {
    width: 100%;
    height: 45px;
}
.tool-group .active {
    color: #2962ff;
}
.center {
    flex: 1;
    min-width: 0;
    margin: 0 6px 0 5px;
    display: flex;
    flex-direction: column;
}

/* top toolbar */
.toolbar {
    height: 49px;
    flex: none;
    display: grid;
    grid-template-columns: 126px 59px 49px 127px 160px 135px 137px 97px 109px 79px 1fr 49px 151px 48px 49px 49px 100px;
    font-size: 17px;
    color: #000;
    background-color: #fff;
    border-bottom: 1px solid #e0e3eb;
}
.toolbar > * {
    border-right: 1px solid #e0e3eb;
}
.toolbar > button {
    justify-content: flex-start;
    gap: 4px;
    padding-left: 8px;
}
.toolbar > .middle {
    justify-content: center;
    padding: 0;
}
.toolbar > .symbol {
    padding-left: 12px;
    font-weight: 600;
}
.toolbar .icon {
    color: #131722;
}
.toolbar .chevron {
    margin-left: auto;
    margin-right: 7px;
}
.toolbar > .unnamed {
    gap: 0;
    padding-left: 5px;
}
.history {
    display: flex;
    justify-content: center;
}
.history button {
    width: 35px;
}
.history .disabled .icon {
    color: #c1c4cd;
}
.toolbar > .publish {
    justify-content: center;
    padding: 0;
    border: 0;
    background-color: #2962ff;
    color: #fff;
    font-weight: 600;
}

/* chart */
.chart-row {
    flex: 1;
    min-height: 0;
    display: flex;
    background-color: #fff;
}
.pane {
    flex: 1;
    min-width: 0;
    position: relative;
}
#chart {
    position: absolute;
    width: 100%;
    height: 100%;
}
.grid path {
    stroke: #2a2e39;
    stroke-opacity: .07;
}
.vol-r {
    fill: #ef5350;
    fill-opacity: .5;
}
.vol-g {
    fill: #26a69a;
    fill-opacity: .5;
}
.r {
    fill: #ef5350;
}
.g {
    fill: #26a69a;
}
.cloud {
    fill: #f44336;
    fill-opacity: .1;
}
.line {
    fill: none;
    stroke-width: 1.2;
}
.span-a {
    stroke: #a5d6a7;
}
.span-b {
    stroke: #ef9a9a;
}
.tenkan {
    stroke: #2962ff;
}
.kijun {
    stroke: #b71c1c;
}
.crosshair {
    stroke: #9598a1;
    stroke-dasharray: 6 5;
}
.arrow {
    fill: none;
    stroke: #000;
    stroke-width: 5;
    stroke-linejoin: round;
}
.legend {
    position: relative;
    display: flex;
    flex-direction: column;
    align-items: flex-start;
    padding: 5px 10px;
    font-size: 15px;
}
.legend h1, .legend p {
    margin: 0;
    font-weight: 400;
    white-space: nowrap;
    background-color: rgba(255, 255, 255, .5);
}
.legend b {
    font-weight: 400;
}
.legend-title {
    display: flex;
    align-items: center;
    height: 30px;
}
.legend h1 {
    font-size: 19px;
    line-height: 30px;
    padding-left: 1px;
}
.legend i {
    font-style: normal;
    color: #b2b5be;
}
.market-dot {
    width: 11px;
    height: 11px;
    margin: 0 27px 0 25px;
    border-radius: 50%;
    background-color: #089981;
    box-shadow: 0 0 0 5px #d9efec;
}
.legend .ohlc {
    font-size: 16px;
    line-height: 30px;
    color: #50535e;
}
.ohlc b, .legend .teal {
    color: #26a69a;
}
.trade {
    display: flex;
    align-items: center;
    margin: 5px 0;
}
.trade span {
    width: 53px;
    text-align: center;
    font-size: 13px;
    color: #50535e;
}
.sell, .buy {
    width: 69px;
    height: 30px;
    border-radius: 4px;
    color: #fff;
    font-size: 15px;
    font-weight: 600;
}
.sell {
    background-color: #f44336;
}
.buy {
    background-color: #2962ff;
}
.legend .study {
    line-height: 30px;
    padding-left: 1px;
    color: #50535e;
}
.study b {
    margin-left: 8px;
}
.legend .blue {
    color: #2962ff;
}
.legend .dark-red {
    color: #b71c1c;
}
.legend .green {
    color: #a5d6a7;
}
.legend .pink {
    color: #ef9a9a;
}
.collapse {
    width: 37px;
    height: 27px;
    margin: 3px 0 0 1px;
    border: 1px solid #d1d4dc;
    border-radius: 4px;
    background-color: rgba(255, 255, 255, .7);
}
.note {
    position: absolute;
    color: #000;
    font-size: 23px;
    line-height: 30px;
    white-space: nowrap;
}
.author {
    left: 65.8%;
    top: 5.5%;
    font-weight: 700;
}
.signal {
    left: 46.6%;
    top: 40.1%;
}
.tv-logo {
    position: absolute;
    left: 9px;
    bottom: 7px;
    width: 41px;
    height: 41px;
    border-radius: 50%;
    background-color: #fff;
    box-shadow: 0 1px 4px rgba(0, 0, 0, .3);
    display: flex;
    align-items: center;
    justify-content: center;
}
.tv-logo svg {
    width: 27px;
    fill: #2962ff;
}
.scroll-end {
    position: absolute;
    right: 20px;
    bottom: 41px;
    width: 35px;
    height: 35px;
    border-radius: 50%;
    background-color: #fff;
    box-shadow: 0 2px 4px rgba(0, 0, 0, .25);
}
.scroll-end svg {
    width: 16px;
    fill: none;
    stroke: #50535e;
    stroke-width: 2;
}
.price-axis {
    width: 70px;
    position: relative;
    border-left: 1px solid #e0e3eb;
    font-size: 14px;
}
.price-axis select {
    position: absolute;
    left: 10px;
    top: 7px;
    width: 47px;
    height: 26px;
    padding-left: 5px;
    border: 1px solid #d1d4dc;
    border-radius: 4px;
    font-size: 13px;
    appearance: none;
}
.usd-arrow {
    position: absolute;
    left: 44px;
    top: 17px;
    width: 9px;
    fill: none;
    stroke: #131722;
    stroke-width: 2;
}
.price {
    position: absolute;
    left: 13px;
    line-height: 20px;
    margin-top: -10px;
}
.price::before, .tag::before {
    content: "";
    position: absolute;
    left: -13px;
    top: 10px;
    width: 6px;
    height: 1px;
    background-color: #d1d4dc;
}
.tag {
    position: absolute;
    left: -1px;
    width: 65px;
    height: 21px;
    line-height: 21px;
    padding-left: 14px;
    border-radius: 0 2px 2px 0;
    color: #fff;
    font-weight: 500;
}
.tag::before {
    left: 0;
}
.teal-tag {
    background-color: #089981;
}
.grey-tag {
    background-color: #787b86;
}
.red-tag {
    background-color: #f44336;
}
.last-tag {
    background-color: #ef5350;
}
.cross-tag {
    left: -28px;
    width: 92px;
    height: 27px;
    line-height: 27px;
    padding-left: 41px;
    background-color: #131722;
}
.cross-tag::before {
    left: 27px;
    top: 13px;
}
.cross-tag svg {
    position: absolute;
    left: 2px;
    top: 2px;
    width: 23px;
    fill: none;
    stroke: #fff;
}
.time-row {
    height: 34px;
    flex: none;
    display: flex;
    background-color: #fff;
    border-top: 1px solid #e0e3eb;
}
.time-axis {
    flex: 1;
    position: relative;
    font-size: 14px;
}
.time {
    position: absolute;
    top: 0;
    line-height: 34px;
    transform: translateX(-50%);
}
.day {
    font-weight: 700;
}
.time-tag {
    position: absolute;
    left: 27.1%;
    top: -1px;
    width: 136px;
    height: 30px;
    transform: translateX(-50%);
    line-height: 34px;
    text-align: center;
    white-space: nowrap;
    border-radius: 0 0 3px 3px;
    background-color: #131722;
    color: #fff;
    font-weight: 600;
}
.axis-settings {
    width: 70px;
    border-left: 1px solid #e0e3eb;
}

/* bottom bars */
.range-bar {
    height: 49px;
    flex: none;
    display: flex;
    align-items: center;
    padding: 0 15px 0 21px;
    gap: 17px;
    background-color: #fff;
    border-top: 1px solid #e0e3eb;
    border-radius: 0 0 5px 5px;
}
.divider {
    width: 1px;
    height: 28px;
    margin: 0 4px;
    background-color: #e0e3eb;
}
.divider + button {
    margin-left: -4px;
}
.clock + .divider {
    margin-right: 8px;
}
.clock {
    font-size: 17px;
}
.bottom-tabs {
    height: 48px;
    flex: none;
    margin-top: 4px;
    display: grid;
    grid-template-columns: 166px 124px 127px 159px 161px 1fr;
    font-size: 17px;
    background-color: #fff;
    border-radius: 5px 5px 0 0;
}
.bottom-tabs > button {
    border-right: 1px solid #e0e3eb;
    justify-content: flex-start;
    padding-left: 20px;
}
.bottom-tabs .chevron {
    margin-left: auto;
    margin-right: 6px;
}
.online {
    width: 7px;
    height: 7px;
    margin-left: 5px;
    border-radius: 50%;
    background-color: #66bb6a;
}
.panel-buttons {
    display: flex;
    justify-content: flex-end;
    gap: 8px;
    padding-right: 12px;
}

/* right widgets */
.right-bar {
    width: 56px;
    background-color: #fff;
    overflow: hidden;
}
.widget-group {
    display: grid;
    grid-auto-rows: 1fr;
    border-bottom: 1px solid #e0e3eb;
}
.widget-group button {
    position: relative;
    padding-right: 1px;
}
.first {
    height: 446px;
    padding-bottom: 8px;
}
.second {
    height: 329px;
    padding: 8px 0;
}
.third {
    height: 134px;
    padding-top: 8px;
    border-bottom: 0;
}
.live-dot {
    position: absolute;
    right: 5px;
    top: 10px;
    width: 17px;
    height: 17px;
    border-radius: 50%;
    background-color: #ff4a68;
}

/* taskbar */
.taskbar {
    height: 50px;
    flex: none;
    display: flex;
    justify-content: space-between;
    background: linear-gradient(to right, #1f1f1f 63%, #2e2021 66%, #262322 78%, #421a1b 88%, #261f1e 96%, #1f1f1f);
    color: #fff;
}
.system-buttons, .apps, .tray {
    display: flex;
    align-items: center;
}
.system-buttons button {
    width: 60px;
}
.system-buttons svg {
    width: 20px;
}
.apps {
    margin: 0 auto 0 4px;
    align-items: stretch;
}
.apps button {
    width: 62px;
    position: relative;
}
.apps svg {
    width: 30px;
}
.open::after {
    content: "";
    position: absolute;
    left: 5px;
    right: 5px;
    bottom: 0;
    height: 3px;
    background-color: #76b9ed;
}
.current {
    background-color: #4c4c4c;
}
.current::after {
    left: 0;
    right: 0;
}
.alerting {
    background-color: #a55f28;
}
.alerting::after {
    left: 0;
    right: 0;
    background-color: #ff7b00;
}
.unread {
    position: absolute;
    left: 28px;
    top: 28px;
    width: 20px;
    border-radius: 4px;
    background-color: #f23c34;
    font-size: 11px;
    line-height: 14px;
    text-align: center;
}
.tray {
    gap: 10px;
}
.tray svg {
    width: 20px;
    fill: none;
    stroke: #fff;
}
.tray .weather {
    width: 28px;
    stroke: none;
}
.forecast {
    margin-right: 9px;
    font-size: 18px;
    white-space: nowrap;
}
.date {
    width: 74px;
    display: flex;
    flex-direction: column;
    align-items: center;
    font-size: 15px;
    line-height: 23px;
}
.action-center {
    position: relative;
    justify-content: flex-start;
    margin-left: 10px;
    width: 46px;
    height: 50px;
}
.action-center span {
    position: absolute;
    left: 8px;
    top: 24px;
    width: 22px;
    border: 1px solid #999;
    border-radius: 50%;
    background-color: #333;
    font-size: 12px;
    line-height: 20px;
}
.show-desktop {
    width: 5px;
    height: 50px;
    border-left: 1px solid #666;
    margin-left: -10px;
}
```
